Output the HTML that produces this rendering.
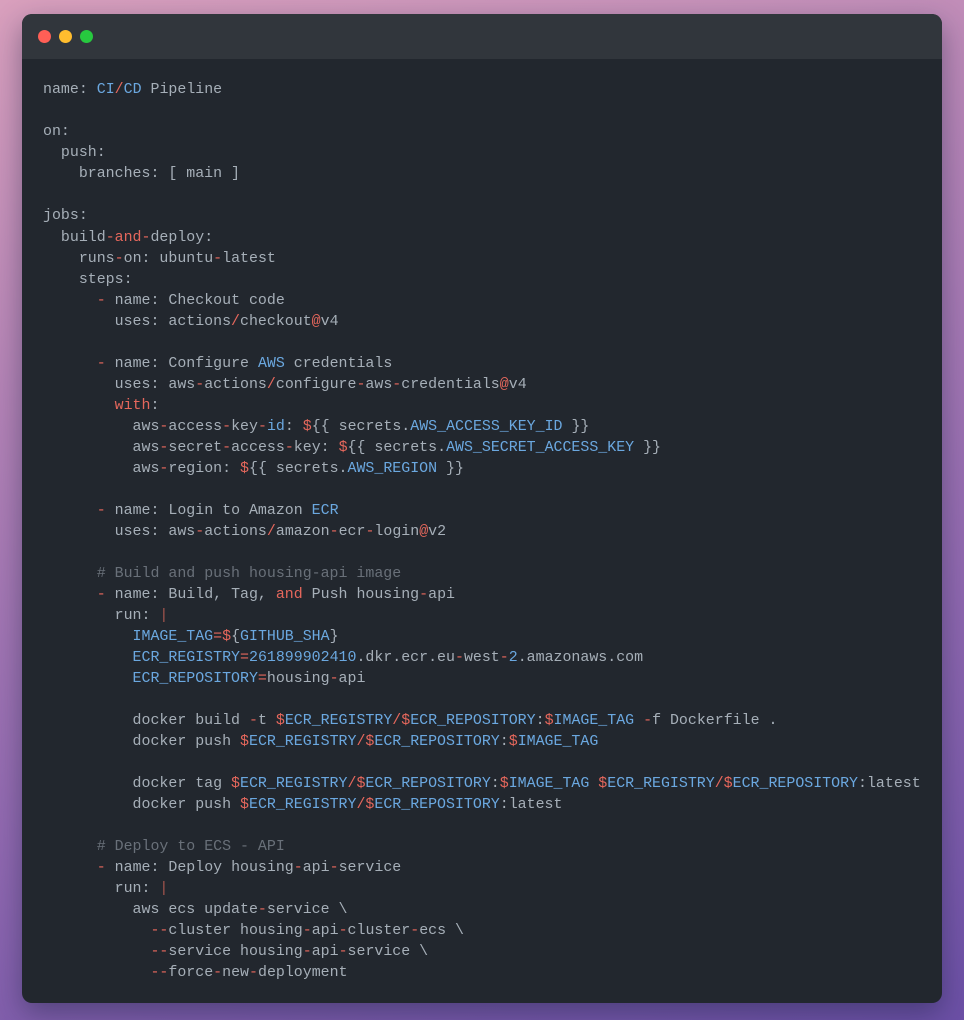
<!DOCTYPE html>
<html>
<head>
<meta charset="utf-8">
<style>
html,body{margin:0;padding:0;width:964px;height:1020px;overflow:hidden;}
body{position:relative;background:linear-gradient(165deg,#d9a0bd 0%,#b584b6 30%,#9169b0 65%,#6c50a6 100%);}
#win{position:absolute;left:22px;top:14px;width:919.5px;height:989px;background:#22272e;border-radius:10px;box-shadow:0 10px 28px rgba(20,30,60,.42);overflow:hidden;}
#bar{position:absolute;left:0;top:0;width:100%;height:45px;background:#31363c;}
.dot{position:absolute;top:15.5px;width:13px;height:13px;border-radius:50%;}
pre{position:absolute;left:21px;top:66.4px;margin:0;font-family:"Liberation Mono","DejaVu Sans Mono",monospace;font-size:14.93px;line-height:21.02px;color:#a6afb8;white-space:pre;}
i{font-style:normal;color:#e5675c;}
b{font-weight:normal;color:#6ba8e0;}
u{text-decoration:none;color:#697079;}
s{text-decoration:none;color:#a5564f;}
</style>
</head>
<body>
<div id="win">
<div id="bar">
<div class="dot" style="left:16px;background:#ff5f56"></div>
<div class="dot" style="left:37px;background:#ffbd2e"></div>
<div class="dot" style="left:58px;background:#27c93f"></div>
</div>
<pre>name: <b>CI</b><i>/</i><b>CD</b> Pipeline

on:
  push:
    branches: [ main ]

jobs:
  build<i>-and-</i>deploy:
    runs<i>-</i>on: ubuntu<i>-</i>latest
    steps:
      <i>-</i> name: Checkout code
        uses: actions<i>/</i>checkout<i>@</i>v4

      <i>-</i> name: Configure <b>AWS</b> credentials
        uses: aws<i>-</i>actions<i>/</i>configure<i>-</i>aws<i>-</i>credentials<i>@</i>v4
        <i>with</i>:
          aws<i>-</i>access<i>-</i>key<i>-</i><b>id</b>: <i>$</i>{{ secrets.<b>AWS_ACCESS_KEY_ID</b> }}
          aws<i>-</i>secret<i>-</i>access<i>-</i>key: <i>$</i>{{ secrets.<b>AWS_SECRET_ACCESS_KEY</b> }}
          aws<i>-</i>region: <i>$</i>{{ secrets.<b>AWS_REGION</b> }}

      <i>-</i> name: Login to Amazon <b>ECR</b>
        uses: aws<i>-</i>actions<i>/</i>amazon<i>-</i>ecr<i>-</i>login<i>@</i>v2

      <u># Build and push housing-api image</u>
      <i>-</i> name: Build, Tag, <i>and</i> Push housing<i>-</i>api
        run: <s>|</s>
          <b>IMAGE_TAG</b><i>=$</i>{<b>GITHUB_SHA</b>}
          <b>ECR_REGISTRY</b><i>=</i><b>261899902410</b>.dkr.ecr.eu<i>-</i>west<i>-</i><b>2</b>.amazonaws.com
          <b>ECR_REPOSITORY</b><i>=</i>housing<i>-</i>api

          docker build <i>-</i>t <i>$</i><b>ECR_REGISTRY</b><i>/$</i><b>ECR_REPOSITORY</b>:<i>$</i><b>IMAGE_TAG</b> <i>-</i>f Dockerfile .
          docker push <i>$</i><b>ECR_REGISTRY</b><i>/$</i><b>ECR_REPOSITORY</b>:<i>$</i><b>IMAGE_TAG</b>

          docker tag <i>$</i><b>ECR_REGISTRY</b><i>/$</i><b>ECR_REPOSITORY</b>:<i>$</i><b>IMAGE_TAG</b> <i>$</i><b>ECR_REGISTRY</b><i>/$</i><b>ECR_REPOSITORY</b>:latest
          docker push <i>$</i><b>ECR_REGISTRY</b><i>/$</i><b>ECR_REPOSITORY</b>:latest

      <u># Deploy to ECS - API</u>
      <i>-</i> name: Deploy housing<i>-</i>api<i>-</i>service
        run: <s>|</s>
          aws ecs update<i>-</i>service \
            <i>--</i>cluster housing<i>-</i>api<i>-</i>cluster<i>-</i>ecs \
            <i>--</i>service housing<i>-</i>api<i>-</i>service \
            <i>--</i>force<i>-</i>new<i>-</i>deployment</pre>
</div>
</body>
</html>
